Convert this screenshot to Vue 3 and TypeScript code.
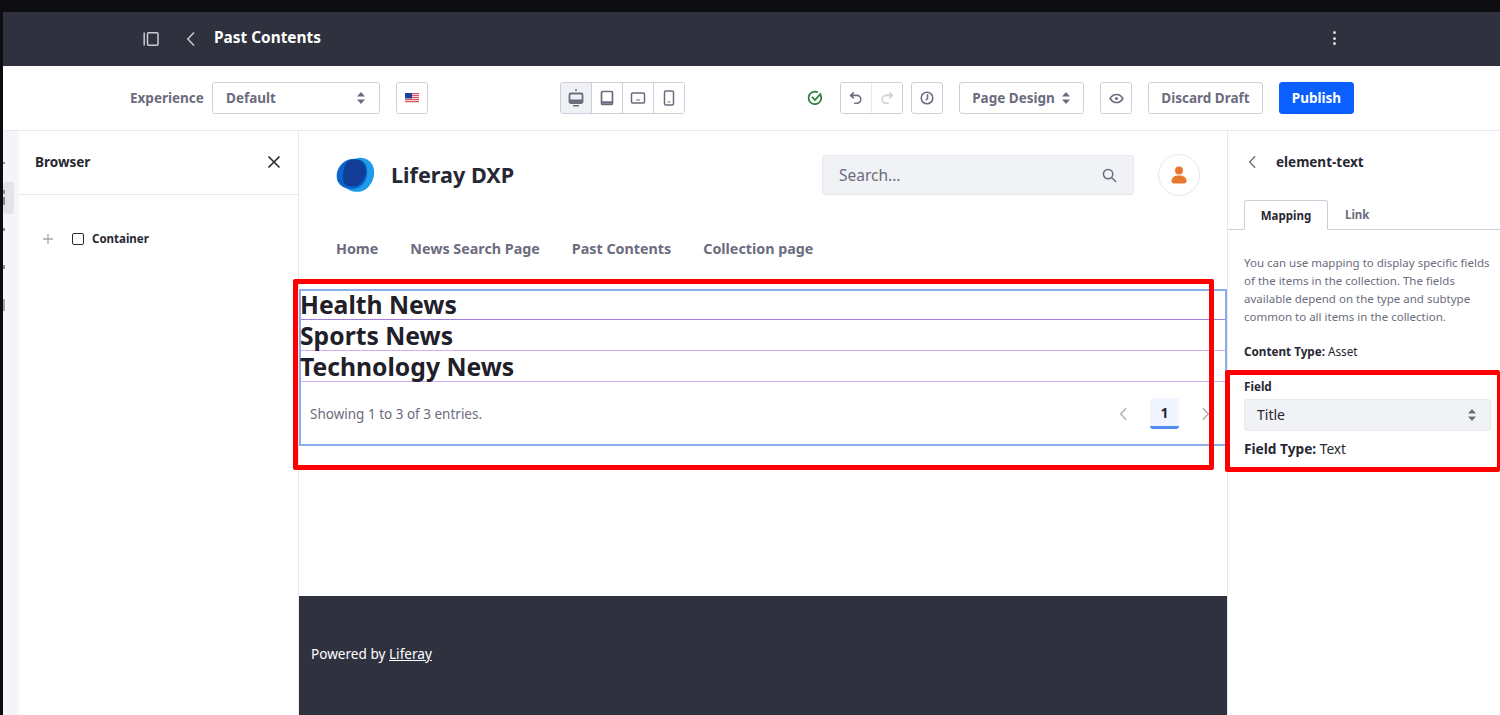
<template>
  <div class="screen">
    <div class="top-strip"></div>
    <div class="app">
      <header class="title-bar">
        <svg class="ico-side" viewBox="0 0 16 16" width="16" height="16" fill="none" stroke="#c9cad3" stroke-width="1.5">
          <path d="M1.2 1.5v13" />
          <rect x="4.5" y="1.8" width="10.5" height="12.4" rx="1" />
        </svg>
        <svg class="ico-back" viewBox="0 0 10 16" width="10" height="16" fill="none" stroke="#c9cad3" stroke-width="1.5">
          <path d="M8 1.5 1.8 8 8 14.5" />
        </svg>
        <span class="page-title">Past Contents</span>
        <span class="kebab"><i></i><i></i><i></i></span>
      </header>

      <div class="toolbar">
        <span class="exp-label">Experience</span>
        <div class="btn exp-select">
          <span>Default</span>
          <svg viewBox="0 0 10 14" width="10" height="14" fill="#6b6c7e"><path d="M5 1 9 5.6H1zM5 13 1 8.4h8z" /></svg>
        </div>
        <div class="btn square flag-btn">
          <svg viewBox="0 0 14 10" width="14" height="10">
            <rect width="14" height="10" fill="#f1d9dc" />
            <path d="M0 .5h14M0 2.5h14M0 4.5h14M0 6.5h14M0 8.5h14" stroke="#d8525f" stroke-width="1" />
            <rect width="7" height="5.4" fill="#1f3f9c" />
          </svg>
        </div>

        <div class="btn-group devices">
          <button v-for="d in devices" :key="d.name" class="seg" :class="{ on: d.name === 'desktop' }">
            <svg viewBox="0 0 16 18" width="16" height="18" fill="none" stroke="#6b6c7e" stroke-width="1.5" v-html="d.svg"></svg>
          </button>
        </div>

        <svg class="saved" viewBox="0 0 16 16" width="16" height="16" fill="none" stroke="#287d3c" stroke-width="1.7">
          <path d="M13.6 5.2A6.3 6.3 0 1 1 10.8 2.3" />
          <path d="M4.9 6.9 8 10l6-6.6" />
        </svg>

        <div class="btn-group undo">
          <button class="seg">
            <svg viewBox="0 0 16 16" width="14" height="14" fill="none" stroke="#6b6c7e" stroke-width="1.8"><path d="M5.5 1.5 1.8 5l3.7 3.5M2 5h7a4.5 4.5 0 0 1 0 9H6" /></svg>
          </button>
          <button class="seg off">
            <svg viewBox="0 0 16 16" width="14" height="14" fill="none" stroke="#cfd0d6" stroke-width="1.8"><path d="M10.5 1.5 14.2 5l-3.7 3.5M14 5H7a4.5 4.5 0 0 0 0 9h3" /></svg>
          </button>
        </div>
        <div class="btn square history">
          <svg viewBox="0 0 16 16" width="14" height="14" fill="none" stroke="#6b6c7e" stroke-width="1.8"><circle cx="8" cy="8" r="6.6" /><path d="M8.6 3.8V8.6L6.6 10.6" /></svg>
        </div>
        <div class="btn page-design">
          <span>Page Design</span>
          <svg viewBox="0 0 10 14" width="10" height="14" fill="#6b6c7e"><path d="M5 1 9 5.6H1zM5 13 1 8.4h8z" /></svg>
        </div>
        <div class="btn square eye">
          <svg viewBox="0 0 16 12" width="15" height="11" fill="none" stroke="#6b6c7e" stroke-width="1.7"><path d="M1 6c1.8-3 4-4.4 7-4.4S13.2 3 15 6c-1.8 3-4 4.4-7 4.4S2.8 9 1 6Z" /><circle cx="8" cy="6" r="1.7" fill="#6b6c7e" stroke="none" /></svg>
        </div>
        <div class="btn discard">Discard Draft</div>
        <div class="btn publish">Publish</div>
      </div>

      <div class="workspace">
        <div class="rail">
          <!-- product menu is scrolled off to the left, only slivers show -->
          <svg viewBox="0 0 16 200" width="16" height="200" fill="#8b8c96">
            <rect y="51" width="11" height="32" rx="3" fill="#e3e4e8" />
            <rect y="31" width="2" height="2" />
            <rect y="59" width="2" height="4" />
            <rect y="66" width="2" height="8" />
            <rect y="97" width="2" height="3" />
            <rect y="134" width="2" height="4" />
            <rect y="168" width="2" height="12" fill="#a7a8b1" />
          </svg>
        </div>

        <aside class="browser">
          <div class="browser-head">
            <span>Browser</span>
            <svg viewBox="0 0 14 14" width="14" height="14" fill="none" stroke="#272833" stroke-width="1.6"><path d="M1.5 1.5l11 11M12.5 1.5l-11 11" /></svg>
          </div>
          <div class="tree-row">
            <svg viewBox="0 0 10 10" width="10" height="10" fill="none" stroke="#a7a9b2" stroke-width="1.3"><path d="M5 0v10M0 5h10" /></svg>
            <span class="tree-box"></span>
            <span>Container</span>
          </div>
        </aside>

        <main class="canvas">
          <div class="site-head">
            <svg viewBox="0 0 39 36" width="39" height="36">
              <path d="M22 1c8-1.5 15 4 16 12 1 9-4 19-13 21.5C16 36 9 32 7 26 3 14 12 3 22 1Z" fill="#1e9be8" />
              <path d="M13 2.5C21 0 30 3 31 12c1 9-3 17-10 19-8 2.5-16 0-19.5-7C-1.5 15 4 5.5 13 2.5Z" fill="#0b63ce" />
              <path d="M14 3C22 1 29 4 30 12c1 7-3 14-9 17-6 1-10 0-13-2C6 18 7 7 14 3Z" fill="#123d96" />
            </svg>
            <span class="site-name">Liferay DXP</span>
            <div class="search">
              <span>Search...</span>
              <svg viewBox="0 0 16 16" width="15" height="15" fill="none" stroke="#6b6c7e" stroke-width="1.6"><circle cx="6.5" cy="6.5" r="5" /><path d="M10.2 10.2 15 15" /></svg>
            </div>
            <div class="avatar">
              <svg viewBox="0 0 16 18" width="16" height="18" fill="#e8772e"><circle cx="8" cy="4.5" r="4" /><path d="M.5 15c0-3.5 3-5.5 7.5-5.5s7.5 2 7.5 5.5c0 1.5-1 2.5-2.5 2.5H3c-1.5 0-2.5-1-2.5-2.5Z" /></svg>
            </div>
          </div>

          <nav class="site-nav">
            <a v-for="item in navItems" :key="item">{{ item }}</a>
          </nav>

          <section class="collection">
            <h2 v-for="title in titles" :key="title" class="row">{{ title }}</h2>
            <div class="pager">
              <span class="entries">Showing 1 to 3 of 3 entries.</span>
              <div class="pages">
                <svg viewBox="0 0 10 16" width="9" height="14" fill="none" stroke="#a7a9b2" stroke-width="1.5"><path d="M8 1.5 1.8 8 8 14.5" /></svg>
                <b class="page-one">1</b>
                <svg viewBox="0 0 10 16" width="9" height="14" fill="none" stroke="#a7a9b2" stroke-width="1.5"><path d="M2 1.5 8.2 8 2 14.5" /></svg>
              </div>
            </div>
          </section>

          <footer class="site-foot">
            <span>Powered by <u>Liferay</u></span>
          </footer>
        </main>

        <aside class="props">
          <div class="props-head">
            <svg viewBox="0 0 10 16" width="9" height="14" fill="none" stroke="#6b6c7e" stroke-width="1.5"><path d="M8 1.5 1.8 8 8 14.5" /></svg>
            <span>element-text</span>
          </div>
          <div class="tabs">
            <span class="tab active">Mapping</span>
            <span class="tab">Link</span>
          </div>
          <div class="props-body">
            <p class="help">You can use mapping to display specific fields of the items in the collection. The fields available depend on the type and subtype common to all items in the collection.</p>
            <p class="content-type"><b>Content Type:</b> Asset</p>
            <label class="field-label">Field</label>
            <div class="field-select">
              <span>Title</span>
              <svg viewBox="0 0 10 14" width="10" height="14" fill="#6b6c7e"><path d="M5 1 9 5.6H1zM5 13 1 8.4h8z" /></svg>
            </div>
            <p class="field-type"><b>Field Type:</b> Text</p>
          </div>
        </aside>
      </div>
    </div>

    <div class="mark mark-main"></div>
    <div class="mark mark-field"></div>
  </div>
</template>

<script setup lang="ts">
const navItems: string[] = ['Home', 'News Search Page', 'Past Contents', 'Collection page']
const titles: string[] = ['Health News', 'Sports News', 'Technology News']

const devices = [
  {
    name: 'desktop',
    svg: '<rect x="1.5" y="4.5" width="13" height="9.5" rx="1.2" stroke-width="1.8"/><path d="M2 12h12" stroke-width="3"/><path d="M5 16.8h6" stroke-width="1.4"/><circle cx="8" cy="1" r="1" fill="#6b6c7e" stroke="none"/>',
  },
  {
    name: 'tablet',
    svg: '<rect x="2.5" y="2.5" width="11" height="13" rx="1.2" stroke-width="1.7"/><path d="M3 13.5h10" stroke-width="2.5"/>',
  },
  {
    name: 'landscape',
    svg: '<rect x="1.5" y="4" width="13" height="10" rx="1.2"/><path d="M6 11h4" stroke-width="1.1"/>',
  },
  {
    name: 'phone',
    svg: '<rect x="3.5" y="2" width="9" height="14" rx="1.5"/><path d="M6.5 13h3" stroke-width="1.1"/>',
  },
]
</script>

<style>
html,
body {
  margin: 0;
  background: #0d0d0f;
}
</style>

<style scoped>
.screen {
  position: relative;
  width: 1500px;
  height: 715px;
  overflow: hidden;
  background: #0d0d0f;
  font-family: 'Noto Sans', 'Open Sans', sans-serif;
  color: #272833;
}

.top-strip {
  height: 12px;
}

.app {
  margin-left: 3px;
  height: 703px;
  display: flex;
  flex-direction: column;
  background: #fff;
}

.title-bar {
  height: 54px;
  flex: none;
  display: flex;
  align-items: center;
  padding: 0 164px 0 140px;
  background: #30313f;
  color: #fff;
}

.ico-side {
  margin-right: 27px;
}

.ico-back {
  margin-right: 18px;
}

.page-title {
  flex: 1;
  margin-bottom: 4px;
  font-size: 15.4px;
  font-weight: 700;
}

.kebab {
  display: flex;
  flex-direction: column;
  gap: 2.5px;
  margin-bottom: 2px;
}

.kebab i {
  width: 3px;
  height: 3px;
  border-radius: 50%;
  background: #d5d6dc;
}

.toolbar {
  height: 65px;
  flex: none;
  box-sizing: border-box;
  display: flex;
  align-items: center;
  padding-left: 127px;
  border-bottom: 1px solid #e7e7ed;
}

.exp-label {
  width: 82px;
  margin-bottom: 1px;
  font-size: 13.5px;
  font-weight: 700;
  color: #6b6c7e;
}

.btn {
  box-sizing: border-box;
  height: 32px;
  display: flex;
  align-items: center;
  justify-content: center;
  border: 1px solid #cdced9;
  border-radius: 3px;
  background: #fff;
  font-size: 13.5px;
  font-weight: 700;
  color: #6b6c7e;
}

.square {
  width: 32px;
}

.exp-select {
  width: 168px;
  justify-content: space-between;
  padding: 0 13px;
}

.flag-btn {
  margin-left: 16px;
}

.btn-group {
  display: flex;
  height: 32px;
  box-sizing: border-box;
  border: 1px solid #cdced9;
  border-radius: 3px;
  overflow: hidden;
}

.seg {
  width: 31px;
  padding: 0;
  display: flex;
  align-items: center;
  justify-content: center;
  border: 0;
  border-left: 1px solid #cdced9;
  background: #fff;
}

.seg:first-child {
  border-left: 0;
  width: 30px;
}

.seg.on {
  background: #f0f1f4;
}

.seg.off {
  border-left-color: #e7e7ed;
}

.devices {
  margin-left: 132px;
  width: 125px;
}

.saved {
  margin-left: 122px;
}

.undo {
  margin-left: 17px;
  width: 63px;
}

.history {
  margin-left: 8px;
}

.page-design {
  margin-left: 16px;
  width: 125px;
  gap: 6px;
}

.eye {
  margin-left: 16px;
}

.discard {
  margin-left: 16px;
  width: 115px;
}

.publish {
  margin-left: 16px;
  width: 75px;
  border-color: #0b5fff;
  background: #0b5fff;
  color: #fff;
}

.workspace {
  flex: 1;
  min-height: 0;
  display: flex;
}

.rail {
  width: 16px;
  flex: none;
  background: #f4f5f7;
}

.browser {
  width: 280px;
  flex: none;
  box-sizing: border-box;
  border-right: 1px solid #e7e7ed;
}

.browser-head {
  height: 64px;
  box-sizing: border-box;
  display: flex;
  align-items: center;
  justify-content: space-between;
  padding: 0 17px 2px 16px;
  border-bottom: 1px solid #e7e7ed;
  font-size: 13.5px;
  font-weight: 700;
}

.tree-row {
  display: flex;
  align-items: center;
  padding: 36px 0 0 24px;
  font-size: 11.5px;
  font-weight: 700;
}

.tree-box {
  box-sizing: border-box;
  width: 12px;
  height: 12px;
  margin: 0 8px 0 19px;
  border: 1.5px solid #272833;
  border-radius: 2px;
}

.canvas {
  width: 929px;
  flex: none;
  display: flex;
  flex-direction: column;
  box-sizing: border-box;
  border-right: 1px solid #e7e7ed;
}

.site-head {
  height: 88px;
  flex: none;
  display: flex;
  align-items: center;
  padding: 0 27px 0 37px;
}

.site-name {
  flex: 1;
  margin: 0 0 2px 16px;
  font-size: 21.6px;
  font-weight: 700;
}

.search {
  box-sizing: border-box;
  width: 312px;
  height: 40px;
  display: flex;
  align-items: center;
  justify-content: space-between;
  padding: 0 16px;
  border: 1px solid #e7e7ed;
  border-radius: 3px;
  background: #f1f2f5;
  font-size: 15.5px;
  color: #6b6c7e;
}

.avatar {
  box-sizing: border-box;
  width: 42px;
  height: 42px;
  margin-left: 24px;
  display: flex;
  align-items: center;
  justify-content: center;
  border: 1px solid #e7e7ed;
  border-radius: 50%;
}

.site-nav {
  height: 70px;
  flex: none;
  box-sizing: border-box;
  display: flex;
  gap: 32px;
  padding: 20px 0 0 37px;
  font-size: 14.3px;
  font-weight: 700;
  color: #6b6c7e;
}

.collection {
  box-sizing: border-box;
  height: 157px;
  flex: none;
  border: 2px solid #8aaeea;
}

.row {
  box-sizing: border-box;
  height: 31px;
  margin: 0;
  border-bottom: 1px solid #d3aef5;
  font-size: 24.7px;
  font-weight: 700;
  line-height: 32px;
  text-indent: -1px;
  color: #1f2029;
}

.row:first-child {
  height: 29px;
  line-height: 28px;
  border-bottom-color: #a07fe0;
}

.pager {
  box-sizing: border-box;
  height: 62px;
  display: flex;
  align-items: center;
  justify-content: space-between;
  padding: 1px 15px 0 9px;
  font-size: 13.5px;
  color: #6b6c7e;
}

.entries {
  margin-top: 0;
}

.pages {
  display: flex;
  align-items: center;
  gap: 22px;
}

.pages svg {
  margin-top: 1px;
}

.page-one {
  box-sizing: border-box;
  width: 29px;
  height: 31px;
  display: flex;
  align-items: center;
  justify-content: center;
  border-bottom: 3px solid #528cf0;
  border-radius: 3px;
  background: #f0f5ff;
  font-size: 14px;
  color: #272833;
}

.site-foot {
  margin-top: 150px;
  flex: 1;
  display: flex;
  align-items: center;
  padding: 0 12px 5px;
  background: #30313f;
  color: #fff;
  font-size: 13.6px;
}

.props {
  flex: 1;
  min-width: 0;
}

.props-head {
  height: 62px;
  box-sizing: border-box;
  display: flex;
  align-items: center;
  gap: 19px;
  padding: 0 0 1px 20px;
  font-size: 13.5px;
  font-weight: 700;
}

.tabs {
  height: 37px;
  box-sizing: border-box;
  display: flex;
  align-items: flex-end;
  padding-left: 16px;
  border-bottom: 1px solid #cdced9;
}

.tab {
  box-sizing: border-box;
  height: 30px;
  display: flex;
  align-items: center;
  padding: 0 17px;
  font-size: 11.5px;
  font-weight: 700;
  color: #6b6c7e;
}

.tab.active {
  width: 84px;
  justify-content: center;
  padding: 0;
  margin-bottom: -1px;
  border: 1px solid #cdced9;
  border-bottom-color: #fff;
  border-radius: 3px 3px 0 0;
  color: #272833;
}

.props-body {
  padding: 24px 9px 0 16px;
  font-size: 11.7px;
}

.help {
  margin: 0 -6px 0 0;
  font-size: 11.5px;
  line-height: 18px;
  color: #6b6c7e;
}

.content-type {
  margin: 16px 0 0;
  line-height: 18px;
}

.field-label {
  display: block;
  margin-top: 17px;
  line-height: 18px;
  font-weight: 700;
}

.field-select {
  box-sizing: border-box;
  height: 32px;
  margin-top: 4px;
  display: flex;
  align-items: center;
  justify-content: space-between;
  padding: 0 13px 0 12px;
  border: 1px solid #e7e7ed;
  border-radius: 3px;
  background: #f1f2f5;
  font-size: 14px;
  color: #272833;
}

.field-select span {
  margin-bottom: 2px;
}

.field-type {
  margin: 8px 0 0;
  line-height: 20px;
  font-size: 13.7px;
}

.mark {
  position: absolute;
  box-sizing: border-box;
  border: 5px solid #fe0000;
  border-radius: 2px;
}

.mark-main {
  left: 293px;
  top: 279px;
  width: 921px;
  height: 191px;
}

.mark-field {
  left: 1225px;
  top: 370px;
  width: 275px;
  height: 102px;
  border-right-width: 3px;
}
</style>
